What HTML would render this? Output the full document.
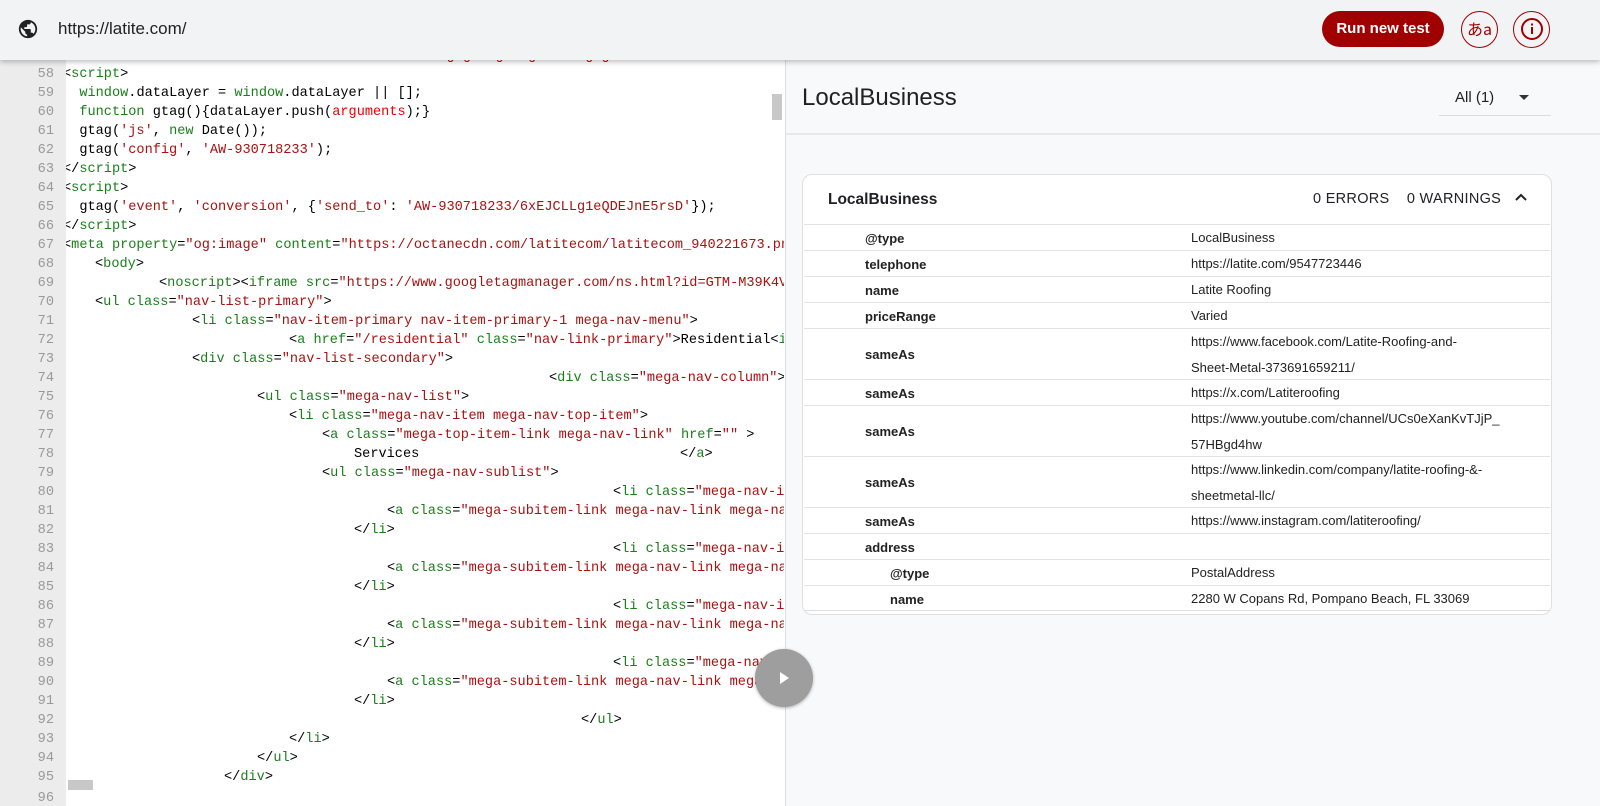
<!DOCTYPE html>
<html><head><meta charset="utf-8"><style>
*{margin:0;padding:0;box-sizing:border-box}
body{width:1600px;height:806px;overflow:hidden;background:#fff;font-family:"Liberation Sans",sans-serif;position:relative}
#top{position:absolute;left:0;top:0;width:1600px;height:60px;background:#f1f3f4;box-shadow:0 2px 5px rgba(0,0,0,.25);z-index:5}
#url{position:absolute;left:58px;top:19px;font-size:17px;color:#202124}
#run{position:absolute;left:1322px;top:11px;width:122px;height:36px;border-radius:18px;background:#a00000;color:#fff;font-weight:bold;font-size:15px;line-height:36px;text-align:center}
.circ{position:absolute;top:11px;width:37px;height:37px;border:1.5px solid #a00000;border-radius:50%;color:#a00000;text-align:center}
#code{position:absolute;left:0;top:60px;width:784px;height:746px;overflow:hidden;font-family:"Liberation Mono",monospace;font-size:13.6px}
.ln{position:absolute;height:19px;line-height:19px;white-space:pre}
.n{position:absolute;left:0;width:54px;text-align:right;color:#999;height:19px;line-height:19px;z-index:2}
.t{color:#1a7f1a}.s{color:#a11}.r{color:#e00}
#right{position:absolute;left:785px;top:60px;width:815px;height:746px;background:#f8f9fa;border-left:1px solid #ddd}
.row{position:absolute;left:1px;width:746px;border-top:1px solid #e3e3e3;font-size:13px;color:#222}
.k{position:absolute;left:61px;font-weight:bold}
.v{position:absolute;left:387px;line-height:25.6px}
</style></head><body>
<div id="top">
<svg style="position:absolute;left:17px;top:18px" width="22" height="22" viewBox="0 0 24 24"><path fill="#202124" d="M12 2C6.48 2 2 6.48 2 12s4.48 10 10 10 10-4.48 10-10S17.52 2 12 2zm-1 17.930c-3.950-.49-7-3.850-7-7.930 0-.62.08-1.210.21-1.790L9 15v1c0 1.100.9 2 2 2v1.930zm6.900-2.540c-.26-.81-1-1.390-1.900-1.390h-1v-3c0-.55-.45-1-1-1H8v-2h2c.55 0 1-.45 1-1V7h2c1.100 0 2-.9 2-2v-.41c2.930 1.190 5 4.060 5 7.410 0 2.080-.8 3.970-2.100 5.390z"/></svg>
<div id="url">https://latite.com/</div>
<div id="run">Run new test</div>
<div class="circ" style="left:1461px;font-family:'Noto Sans CJK JP',sans-serif;font-size:16px;line-height:33px">あa</div>
<div class="circ" style="left:1513px"><svg width="34" height="34" viewBox="0 0 34 34"><circle cx="17" cy="17" r="10" fill="none" stroke="#a00000" stroke-width="2"/><rect x="16" y="15" width="2" height="7" fill="#a00000"/><rect x="16" y="11.5" width="2" height="2" fill="#a00000"/></svg></div>
</div>

<div id="code">
<div style="position:absolute;left:0;top:0;width:66px;height:746px;background:#ececec;z-index:1"></div>
<div class="ln" style="left:63px;top:-13px"><span class="t">         .         .    .   .</span>          <span class="s">'  ''   g g   g   g     'g g</span></div>
<div class="n" style="top:5px">58</div><div class="ln" style="left:63px;top:5px">&lt;<span class="t">script</span>&gt;</div>
<div class="n" style="top:24px">59</div><div class="ln" style="left:63px;top:24px">  <span class="t">window</span>.dataLayer = <span class="t">window</span>.dataLayer || [];</div>
<div class="n" style="top:43px">60</div><div class="ln" style="left:63px;top:43px">  <span class="t">function</span> gtag(){dataLayer.push(<span class="r">arguments</span>);}</div>
<div class="n" style="top:62px">61</div><div class="ln" style="left:63px;top:62px">  gtag(<span class="s">'js'</span>, <span class="t">new</span> Date());</div>
<div class="n" style="top:81px">62</div><div class="ln" style="left:63px;top:81px">  gtag(<span class="s">'config'</span>, <span class="s">'AW-930718233'</span>);</div>
<div class="n" style="top:100px">63</div><div class="ln" style="left:63px;top:100px">&lt;/<span class="t">script</span>&gt;</div>
<div class="n" style="top:119px">64</div><div class="ln" style="left:63px;top:119px">&lt;<span class="t">script</span>&gt;</div>
<div class="n" style="top:138px">65</div><div class="ln" style="left:63px;top:138px">  gtag(<span class="s">'event'</span>, <span class="s">'conversion'</span>, {<span class="s">'send_to'</span>: <span class="s">'AW-930718233/6xEJCLLg1eQDEJnE5rsD'</span>});</div>
<div class="n" style="top:157px">66</div><div class="ln" style="left:63px;top:157px">&lt;/<span class="t">script</span>&gt;</div>
<div class="n" style="top:176px">67</div><div class="ln" style="left:63px;top:176px">&lt;<span class="t">meta property</span>=<span class="s">"og:image"</span> <span class="t">content</span>=<span class="s">"https://octanecdn.com/latitecom/latitecom_940221673.png"</span></div>
<div class="n" style="top:195px">68</div><div class="ln" style="left:95px;top:195px">&lt;<span class="t">body</span>&gt;</div>
<div class="n" style="top:214px">69</div><div class="ln" style="left:159px;top:214px">&lt;<span class="t">noscript</span>&gt;&lt;<span class="t">iframe src</span>=<span class="s">"https://www.googletagmanager.com/ns.html?id=GTM-M39K4V"</span></div>
<div class="n" style="top:233px">70</div><div class="ln" style="left:95px;top:233px">&lt;<span class="t">ul class</span>=<span class="s">"nav-list-primary"</span>&gt;</div>
<div class="n" style="top:252px">71</div><div class="ln" style="left:192px;top:252px">&lt;<span class="t">li class</span>=<span class="s">"nav-item-primary nav-item-primary-1 mega-nav-menu"</span>&gt;</div>
<div class="n" style="top:271px">72</div><div class="ln" style="left:289px;top:271px">&lt;<span class="t">a href</span>=<span class="s">"/residential"</span> <span class="t">class</span>=<span class="s">"nav-link-primary"</span>&gt;Residential&lt;<span class="t">i</span></div>
<div class="n" style="top:290px">73</div><div class="ln" style="left:192px;top:290px">&lt;<span class="t">div class</span>=<span class="s">"nav-list-secondary"</span>&gt;</div>
<div class="n" style="top:309px">74</div><div class="ln" style="left:549px;top:309px">&lt;<span class="t">div class</span>=<span class="s">"mega-nav-column"</span>&gt;</div>
<div class="n" style="top:328px">75</div><div class="ln" style="left:257px;top:328px">&lt;<span class="t">ul class</span>=<span class="s">"mega-nav-list"</span>&gt;</div>
<div class="n" style="top:347px">76</div><div class="ln" style="left:289px;top:347px">&lt;<span class="t">li class</span>=<span class="s">"mega-nav-item mega-nav-top-item"</span>&gt;</div>
<div class="n" style="top:366px">77</div><div class="ln" style="left:322px;top:366px">&lt;<span class="t">a class</span>=<span class="s">"mega-top-item-link mega-nav-link"</span> <span class="t">href</span>=<span class="s">""</span> &gt;</div>
<div class="n" style="top:385px">78</div><div class="ln" style="left:354px;top:385px">Services</div><div class="ln" style="left:680px;top:385px">&lt;/<span class="t">a</span>&gt;</div>
<div class="n" style="top:404px">79</div><div class="ln" style="left:322px;top:404px">&lt;<span class="t">ul class</span>=<span class="s">"mega-nav-sublist"</span>&gt;</div>
<div class="n" style="top:423px">80</div><div class="ln" style="left:613px;top:423px">&lt;<span class="t">li class</span>=<span class="s">"mega-nav-item</span></div>
<div class="n" style="top:442px">81</div><div class="ln" style="left:387px;top:442px">&lt;<span class="t">a class</span>=<span class="s">"mega-subitem-link mega-nav-link mega-nav</span></div>
<div class="n" style="top:461px">82</div><div class="ln" style="left:354px;top:461px">&lt;/<span class="t">li</span>&gt;</div>
<div class="n" style="top:480px">83</div><div class="ln" style="left:613px;top:480px">&lt;<span class="t">li class</span>=<span class="s">"mega-nav-item</span></div>
<div class="n" style="top:499px">84</div><div class="ln" style="left:387px;top:499px">&lt;<span class="t">a class</span>=<span class="s">"mega-subitem-link mega-nav-link mega-nav</span></div>
<div class="n" style="top:518px">85</div><div class="ln" style="left:354px;top:518px">&lt;/<span class="t">li</span>&gt;</div>
<div class="n" style="top:537px">86</div><div class="ln" style="left:613px;top:537px">&lt;<span class="t">li class</span>=<span class="s">"mega-nav-item</span></div>
<div class="n" style="top:556px">87</div><div class="ln" style="left:387px;top:556px">&lt;<span class="t">a class</span>=<span class="s">"mega-subitem-link mega-nav-link mega-nav</span></div>
<div class="n" style="top:575px">88</div><div class="ln" style="left:354px;top:575px">&lt;/<span class="t">li</span>&gt;</div>
<div class="n" style="top:594px">89</div><div class="ln" style="left:613px;top:594px">&lt;<span class="t">li class</span>=<span class="s">"mega-nav-item</span></div>
<div class="n" style="top:613px">90</div><div class="ln" style="left:387px;top:613px">&lt;<span class="t">a class</span>=<span class="s">"mega-subitem-link mega-nav-link mega-nav</span></div>
<div class="n" style="top:632px">91</div><div class="ln" style="left:354px;top:632px">&lt;/<span class="t">li</span>&gt;</div>
<div class="n" style="top:651px">92</div><div class="ln" style="left:581px;top:651px">&lt;/<span class="t">ul</span>&gt;</div>
<div class="n" style="top:670px">93</div><div class="ln" style="left:289px;top:670px">&lt;/<span class="t">li</span>&gt;</div>
<div class="n" style="top:689px">94</div><div class="ln" style="left:257px;top:689px">&lt;/<span class="t">ul</span>&gt;</div>
<div class="n" style="top:708px">95</div><div class="ln" style="left:224px;top:708px">&lt;/<span class="t">div</span>&gt;</div>
<div class="n" style="top:729px">96</div>
<div style="position:absolute;left:772px;top:34px;width:10px;height:26px;background:#c8c8c8"></div>
<div style="position:absolute;left:68px;top:720px;width:25px;height:10px;background:#c8c8c8;z-index:2"></div>
</div>

<div id="right">
<div style="position:absolute;left:16px;top:24px;font-size:24px;color:#202124">LocalBusiness</div>
<div style="position:absolute;left:653px;top:0;width:112px;height:56px;border-bottom:1px solid #ddd">
<div style="position:absolute;left:16px;top:29px;font-size:15px;color:#202124">All (1)</div>
<div style="position:absolute;left:80px;top:35px;border-left:5px solid transparent;border-right:5px solid transparent;border-top:5px solid #333"></div></div>
<div style="position:absolute;left:0;top:73px;width:815px;border-top:2px solid #e8e8e8"></div>
<div style="position:absolute;left:16px;top:114px;width:750px;height:441px;background:#fff;border:1px solid #e0e0e0;border-radius:10px;overflow:hidden">
<div style="position:absolute;left:25px;top:16px;font-size:15.5px;font-weight:bold;color:#202124">LocalBusiness</div>
<div style="position:absolute;left:510px;top:16px;font-size:14.5px;color:#202124;letter-spacing:.3px">0 ERRORS&nbsp;&nbsp;&nbsp;&nbsp;0 WARNINGS</div>
<svg style="position:absolute;left:711px;top:17px" width="14" height="10" viewBox="0 0 14 10"><path d="M2 8 L7 3 L12 8" fill="none" stroke="#222" stroke-width="2"/></svg>
<div class="row" style="top:49px;height:26px"><span class="k" style="top:6px">@type</span><span class="v" style="top:0">LocalBusiness</span></div>
<div class="row" style="top:75px;height:26px"><span class="k" style="top:6px">telephone</span><span class="v" style="top:0">https://latite.com/9547723446</span></div>
<div class="row" style="top:101px;height:26px"><span class="k" style="top:6px">name</span><span class="v" style="top:0">Latite Roofing</span></div>
<div class="row" style="top:127px;height:26px"><span class="k" style="top:6px">priceRange</span><span class="v" style="top:0">Varied</span></div>
<div class="row" style="top:153px;height:51px"><span class="k" style="top:18px">sameAs</span><span class="v" style="top:0">https://www.facebook.com/Latite-Roofing-and-<br>Sheet-Metal-373691659211/</span></div>
<div class="row" style="top:204px;height:26px"><span class="k" style="top:6px">sameAs</span><span class="v" style="top:0">https://x.com/Latiteroofing</span></div>
<div class="row" style="top:230px;height:51px"><span class="k" style="top:18px">sameAs</span><span class="v" style="top:0">https://www.youtube.com/channel/UCs0eXanKvTJjP_<br>57HBgd4hw</span></div>
<div class="row" style="top:281px;height:51px"><span class="k" style="top:18px">sameAs</span><span class="v" style="top:0">https://www.linkedin.com/company/latite-roofing-&amp;-<br>sheetmetal-llc/</span></div>
<div class="row" style="top:332px;height:26px"><span class="k" style="top:6px">sameAs</span><span class="v" style="top:0">https://www.instagram.com/latiteroofing/</span></div>
<div class="row" style="top:358px;height:26px"><span class="k" style="top:6px">address</span></div>
<div class="row" style="top:384px;height:26px"><span class="k" style="top:6px;left:86px">@type</span><span class="v" style="top:0">PostalAddress</span></div>
<div class="row" style="top:410px;height:26px;border-bottom:1px solid #ddd"><span class="k" style="top:6px;left:86px">name</span><span class="v" style="top:0">2280 W Copans Rd, Pompano Beach, FL 33069</span></div>
</div>
</div>

<div style="position:absolute;left:755px;top:649px;width:58px;height:58px;border-radius:50%;background:#9e9e9e;box-shadow:0 1px 3px rgba(0,0,0,.3);z-index:6">
<div style="position:absolute;left:25px;top:23px;border-top:6px solid transparent;border-bottom:6px solid transparent;border-left:9px solid #fff"></div></div>
</body></html>
